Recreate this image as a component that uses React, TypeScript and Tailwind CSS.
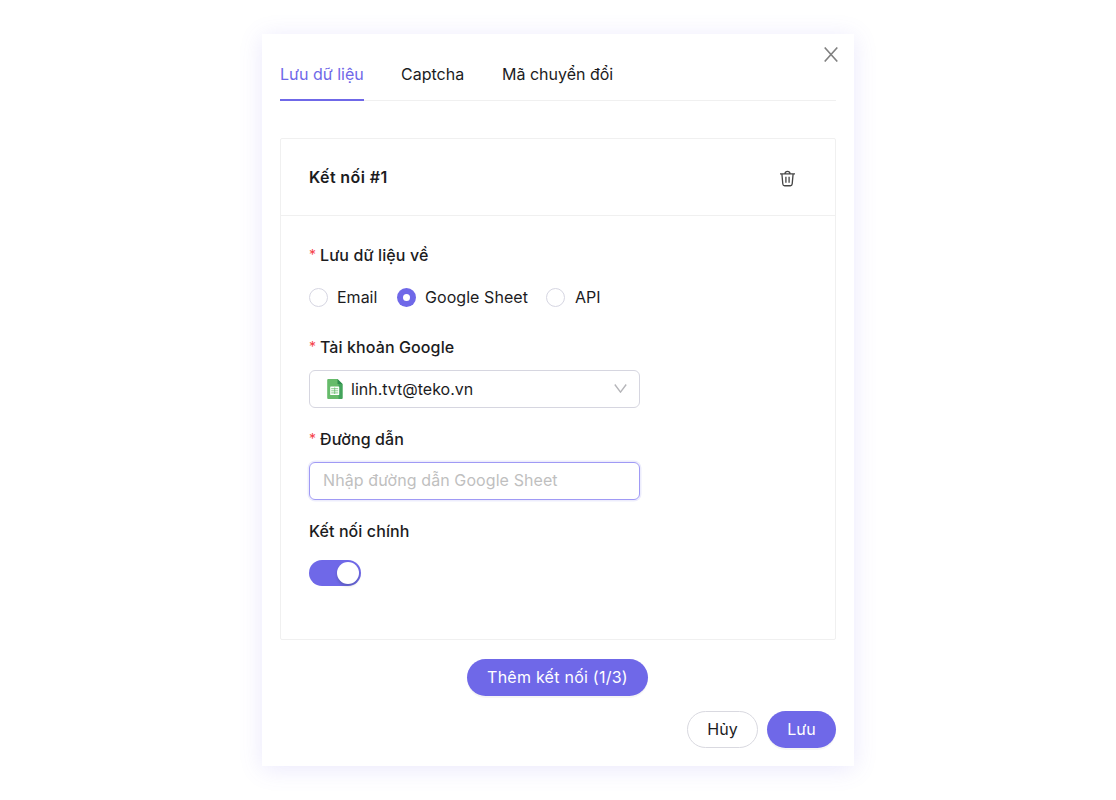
import type { ReactNode } from 'react';

function Label({ children, required }: { children: ReactNode; required?: boolean }) {
  return (
    <div className="-mt-px mb-px flex h-6 items-center font-medium tracking-[0.1px]">
      {required && <span className="mr-[5px] w-[6px] text-[14px] font-normal text-[#f5414a]">*</span>}
      {children}
    </div>
  );
}

function Radio({ checked }: { checked?: boolean }) {
  return checked ? (
    <span className="flex size-[19px] items-center justify-center rounded-full bg-[#6f68e8]">
      <span className="size-[7px] rounded-full bg-white" />
    </span>
  ) : (
    <span className="size-[19px] rounded-full border border-[#d6d6e2] bg-white" />
  );
}

function SheetIcon() {
  return (
    <svg width="16" height="20" viewBox="0 0 16 20">
      <path d="M1.200 0H10.500l5 5V19a1 1 0 0 1-1 1H1.200a1 1 0 0 1-1-1V1a1 1 0 0 1 1-1Z" fill="#66bb6a" />
      <path d="M11.500 5h4V19a1 1 0 0 1-1 1h-3Z" fill="#43a35c" />
      <path d="M10.500 0l5 5h-5Z" fill="#2e8b4d" />
      <rect x="3.200" y="7.500" width="9" height="8.500" rx=".5" fill="#fff" />
      <path d="M4.200 9.700h7M4.200 11.800h7M4.200 13.900h7M7.700 8.500v6.500" stroke="#66bb6a" strokeWidth=".8" />
    </svg>
  );
}

export default function App() {
  return (
    <div className="flex h-[800px] w-[1116px] justify-center bg-white pt-[34px] font-['Inter','Liberation_Sans',sans-serif] text-[16px] leading-6 text-[#1c1c1e]">
      <div className="relative flex h-[732px] w-[592px] flex-col bg-white px-[18px] shadow-[0_3px_22px_rgba(111,104,232,0.15)]">
        <button className="absolute top-[13px] right-[16px]" aria-label="Close">
          <svg width="14" height="15" viewBox="0 0 14 15" fill="none" stroke="#808080" strokeWidth="1.600">
            <path d="M.7.500l12.600 14M13.300.500L.700 14.500" />
          </svg>
        </button>

        <div className="mt-[14px] flex h-[53px] gap-[37px] border-b border-[#f0f0f0]">
          <div className="-mb-px h-[53px] w-[84px] border-b-2 border-[#6f68e8] pt-[14px] whitespace-nowrap text-[#6f68e8]">Lưu dữ liệu</div>
          <div className="w-[64px] pt-[14px] whitespace-nowrap">Captcha</div>
          <div className="pt-[14px] whitespace-nowrap">Mã chuyển đổi</div>
        </div>

        <div className="mt-[37px] h-[502px] rounded-[2px] border border-[#f0f0f0]">
          <div className="flex h-[77px] items-center justify-between border-b border-[#f0f0f0] pr-[40px] pl-7">
            <span className="font-semibold tracking-[0.4px]">Kết nối #1</span>
            <svg className="mt-[3px]" width="15" height="17" viewBox="0 0 16 17" fill="none" stroke="#454545" strokeWidth="1.400">
              <path d="M0 3.500h16M2 3.500l1 10.800q.2 1.900 1.900 1.900h6.200q1.700 0 1.900-1.900l1-10.800M5.300 3.200Q5.600.900 8 .900t2.700 2.300M6.300 6.500v6.500M9.700 6.500v6.500" />
            </svg>
          </div>

          <div className="flex flex-col gap-5 px-7 pt-7">
            <div className="flex flex-col gap-[10px]">
              <Label required>Lưu dữ liệu về</Label>
              <div className="flex h-[38px] items-center">
                <Radio />
                <span className="ml-[9px] w-[60px]">Email</span>
                <Radio checked />
                <span className="ml-[9px] w-[121px] whitespace-nowrap tracking-[0.06px]">Google Sheet</span>
                <Radio />
                <span className="ml-[10px]">API</span>
              </div>
            </div>

            <div className="flex flex-col gap-[10px]">
              <Label required>Tài khoản Google</Label>
              <div className="flex h-[38px] w-[331px] items-center rounded-[6px] border border-[#d6d6e0] pr-[12px] pl-[17px]">
                <SheetIcon />
                <span className="ml-[8px] flex-1">linh.tvt@teko.vn</span>
                <svg className="-mt-px" width="13" height="9" viewBox="0 0 13 9" fill="none" stroke="#b5b5b9" strokeWidth="1.400">
                  <path d="M.8.500l5.700 7.600L12.200.500" />
                </svg>
              </div>
            </div>

            <div className="flex flex-col gap-[10px]">
              <Label required>Đường dẫn</Label>
              <input
                className="h-[38px] w-[331px] rounded-[6px] border border-[#a09af5] px-[13px] pb-[2px] tracking-[0.09px] shadow-[0_0_0_1.5px_rgba(111,104,232,0.12)] outline-none placeholder:text-[#bfbfbf]"
                placeholder="Nhập đường dẫn Google Sheet"
              />
            </div>

            <div className="flex flex-col gap-[10px]">
              <Label>Kết nối chính</Label>
              <div className="flex h-[38px] items-center">
                <div className="flex h-[26px] w-[52px] items-center justify-end rounded-full bg-[#6f68e8] pr-[2px]">
                  <div className="size-[22px] rounded-full bg-white shadow-[0_2px_3px_rgba(0,35,11,0.2)]" />
                </div>
              </div>
            </div>
          </div>
        </div>

        <div className="mt-[19px] flex justify-center">
          <button className="mr-px h-[37px] w-[181px] rounded-full bg-[#6f68e8] pb-px tracking-[0.25px] whitespace-nowrap text-white shadow-[0_2px_0_rgba(0,0,0,0.04)]">Thêm kết nối (1/3)</button>
        </div>
        <div className="mt-[15px] flex justify-end gap-[9px]">
          <button className="h-[37px] w-[71px] rounded-full border border-[#d9d9e0] bg-white pb-px">Hủy</button>
          <button className="h-[37px] w-[69px] rounded-full bg-[#6f68e8] pb-px text-white shadow-[0_2px_0_rgba(0,0,0,0.04)]">Lưu</button>
        </div>
      </div>
    </div>
  );
}
